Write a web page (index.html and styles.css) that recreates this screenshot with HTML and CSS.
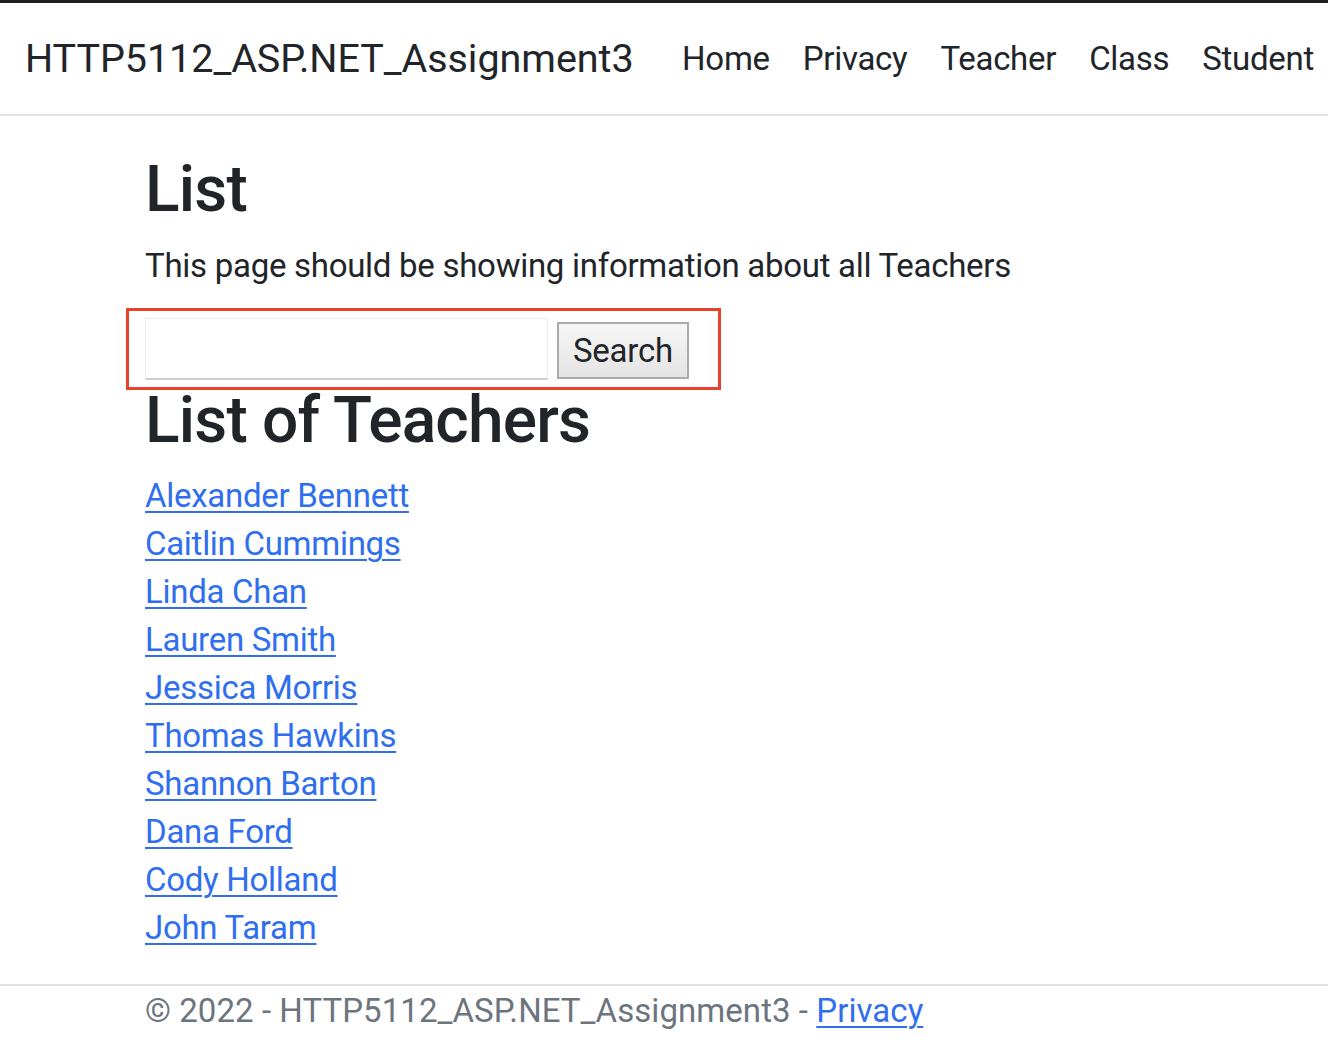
FILE: index.html
```html
<!DOCTYPE html>
<html lang="en">
<head>
<meta charset="utf-8">
<title>List - HTTP5112_ASP.NET_Assignment3</title>
<link rel="stylesheet" href="styles.css">
</head>
<body>
<div class="topbar"></div>
<header class="navbar">
  <a class="brand" href="#">HTTP5112_ASP.NET_Assignment3</a>
  <nav class="nav">
    <a href="#">Home</a>
    <a href="#">Privacy</a>
    <a href="#">Teacher</a>
    <a href="#">Class</a>
    <a href="#">Student</a>
  </nav>
</header>
<main class="container">
  <h1 class="title">List</h1>
  <p class="lead">This page should be showing information about all Teachers</p>
  <form class="search-form">
    <input class="search-input" type="text" name="SearchKey">
    <button class="search-btn" type="button">Search</button>
  </form>
  <h1 class="title title-list">List of Teachers</h1>
  <div class="teachers">
    <a href="#">Alexander Bennett</a>
    <a href="#">Caitlin Cummings</a>
    <a href="#">Linda Chan</a>
    <a href="#">Lauren Smith</a>
    <a href="#">Jessica Morris</a>
    <a href="#">Thomas Hawkins</a>
    <a href="#">Shannon Barton</a>
    <a href="#">Dana Ford</a>
    <a href="#">Cody Holland</a>
    <a href="#">John Taram</a>
  </div>
</main>
<footer class="footer">
  <div class="footer-inner">&copy; 2022 - HTTP5112_ASP.NET_Assignment3 - <a href="#">Privacy</a></div>
</footer>
</body>
</html>
```

FILE: styles.css
```css
* { box-sizing: border-box; }
html, body { margin: 0; padding: 0; }
body {
  font-family: Roboto, "Liberation Sans", sans-serif;
  color: #212529;
  background: #fff;
  font-size: 33px;
  line-height: 48px;
  letter-spacing: -0.28px;
}
.topbar {
  height: 3px;
  background: #1e1e1e;
}
.navbar {
  height: 113px;
  border-bottom: 2px solid #dee2e6;
  display: flex;
  align-items: center;
  padding-left: 25px;
}
.brand {
  font-size: 39.5px;
  line-height: 48px;
  color: #212529;
  text-decoration: none;
  margin-right: 32px;
  letter-spacing: -0.05px;
}
.nav {
  display: flex;
}
.nav a {
  color: #212529;
  text-decoration: none;
  padding: 0 16.5px;
  font-size: 33px;
  line-height: 48px;
}
.container {
  padding-left: 145px;
  padding-top: 36px;
  height: 868px;
}
.title {
  margin: 0;
  font-size: 64px;
  font-weight: 500;
  line-height: 76px;
  letter-spacing: -0.8px;
}
.lead {
  margin: 14px 0 0;
}
.search-form {
  position: relative;
  margin-top: 28px;
  display: flex;
  align-items: flex-end;
  gap: 9px;
  height: 62px;
}
.search-form::before {
  content: "";
  position: absolute;
  left: -19px;
  top: -10px;
  width: 595px;
  height: 82px;
  border: 3px solid #e8432a;
  box-sizing: border-box;
  pointer-events: none;
}
.search-input {
  width: 403px;
  height: 62px;
  margin: 0;
  border: 1px solid #ececec;
  border-bottom: 2px solid #cfcfcf;
  background: #fff;
}
.search-btn {
  width: 132px;
  height: 57px;
  margin: 0 0 1px;
  border: 2px solid #ababab;
  background: linear-gradient(#f6f6f6, #e4e4e4);
  font-family: inherit;
  font-size: 33px;
  letter-spacing: -0.2px;
  color: #212529;
  padding: 0;
}
.title-list {
  margin-top: 3px;
}
.teachers {
  margin-top: 13px;
  display: flex;
  flex-direction: column;
  align-items: flex-start;
}
.teachers a, .footer a {
  color: #2f6fef;
  text-decoration: underline;
  text-underline-offset: 4px;
  text-decoration-thickness: 2px;
}
.footer {
  border-top: 2px solid #dee2e6;
  color: #6c757d;
}
.footer-inner {
  padding-left: 145px;
  padding-top: 1px;
  letter-spacing: 0.06px;
}
```
